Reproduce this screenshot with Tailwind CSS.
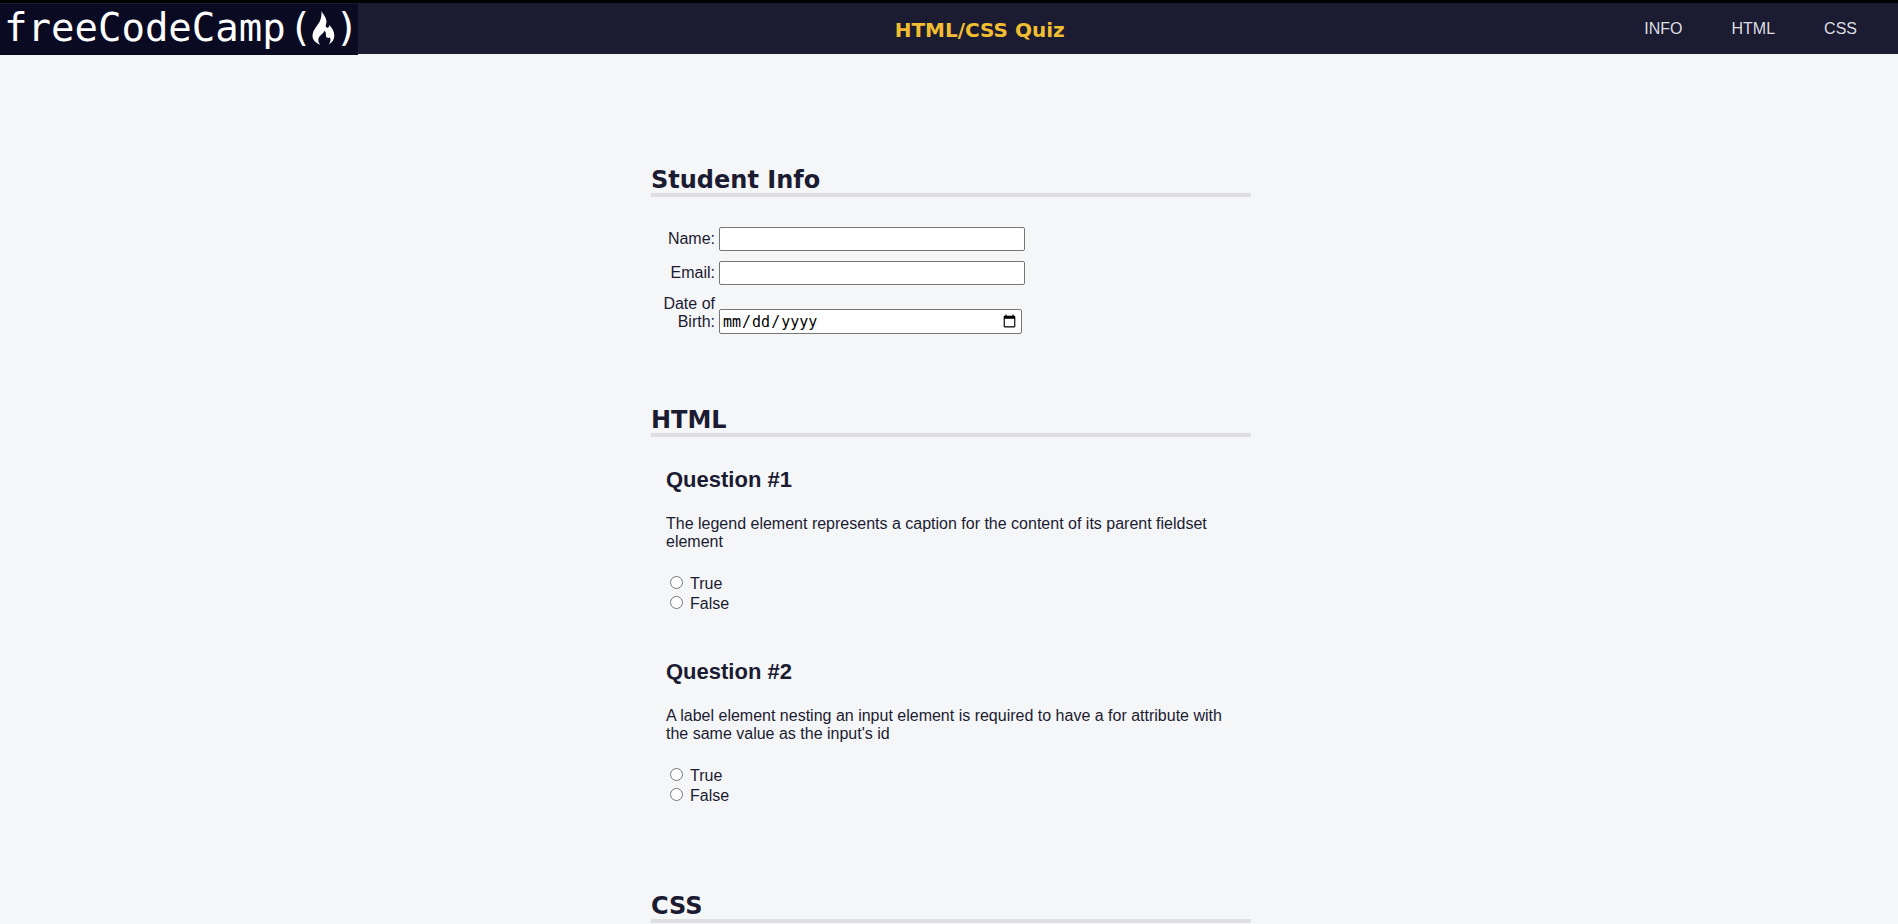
<!DOCTYPE html>
<html lang="en">
<head>
<meta charset="UTF-8">
<meta name="viewport" content="width=device-width, initial-scale=1.0">
<title>HTML/CSS Quiz</title>
<script src="https://cdn.jsdelivr.net/npm/@tailwindcss/browser@4"></script>
</head>
<body class="bg-[#f5f6f7] font-['Liberation_Sans',Arial,sans-serif] text-base leading-[18px] text-[#1b1b32]">
<header class="flex h-[54px] items-center justify-between border-t-3 border-black bg-[#1b1b32]">
  <a href="#" aria-label="freeCodeCamp" class="mt-px flex h-[51px] w-[358px] shrink-0 items-center self-start bg-[#0a0a23] pb-1 pl-1 font-['DejaVu_Sans_Mono',monospace] text-[39px] leading-[46px] text-white">
    <span class="mr-[3px]">freeCodeCamp</span>
    <span>(</span>
    <svg class="h-[34px] w-[23px] shrink-0" viewBox="0 0 23 34" fill="#fff" aria-hidden="true">
      <path d="M9.500 0C10.500 2.500 14.500 6.500 14.500 10.500C14.500 12.500 13.200 14.500 14 16C15 17.200 17.500 17 17.300 14C20.500 17.500 22.300 20.500 22.300 24.500C22.300 28.500 20.500 31.500 16.500 33.500C18.500 31 19 29 18 26.500C16.500 27.500 14.200 27 14 25C13.800 23.200 14.500 22 12.500 19.500C12 22.500 7.500 24 6.500 27.500C5.800 30 6.800 32 8 33.700C3.500 32 .3 28.500 .5 24.500C.8 18 6.500 14.500 8.500 8.500C9.500 5.500 9.500 3 9.500 0Z"/>
    </svg>
    <span>)</span>
  </a>
  <h1 class="pt-0.5 font-['Verdana','DejaVu_Sans',sans-serif] text-xl leading-6 font-bold text-[#f1be32]">HTML/CSS Quiz</h1>
  <nav class="pr-[41px] pl-[43px]">
    <ul class="flex gap-[49px] text-[#dfdfe2]">
      <li><a href="#student-info">INFO</a></li>
      <li><a href="#html-questions">HTML</a></li>
      <li><a href="#css-questions">CSS</a></li>
    </ul>
  </nav>
</header>
<main class="pt-[113px] pl-1">
  <form class="mx-auto max-w-[600px]">
    <section id="student-info" aria-labelledby="info-title" class="pb-[73px]">
      <h2 id="info-title" class="mb-[30px] border-b-4 border-[#dfdfe2] font-['Verdana','DejaVu_Sans',sans-serif] text-2xl leading-[26px] font-bold">Student Info</h2>
      <div class="flex flex-col gap-2.5 pl-2.5">
        <div class="flex items-end gap-1">
          <label for="name" class="w-[54px] pb-[3px] text-right">Name:</label>
          <input id="name" type="text" class="h-6 w-[306px] rounded-xs border border-[#767676] bg-white px-1">
        </div>
        <div class="flex items-end gap-1">
          <label for="email" class="w-[54px] pb-[3px] text-right">Email:</label>
          <input id="email" type="email" class="h-6 w-[306px] rounded-xs border border-[#767676] bg-white px-1">
        </div>
        <div class="flex items-end gap-1">
          <label for="dob" class="w-[54px] pb-[3px] text-right">Date of Birth:</label>
          <input id="dob" type="date" class="h-[25px] w-[303px] rounded-xs border border-[#767676] bg-white px-0.5 font-['DejaVu_Sans_Mono',monospace] text-[15px] text-black">
        </div>
      </div>
    </section>
    <section id="html-questions" aria-labelledby="html-title" class="pb-[87px]">
      <h2 id="html-title" class="mb-[31px] border-b-4 border-[#dfdfe2] font-['Verdana','DejaVu_Sans',sans-serif] text-2xl leading-[26px] font-bold">HTML</h2>
      <div class="flex flex-col gap-[46px] px-[15px]">
        <article>
          <h3 class="mb-[23px] text-[22px] leading-6 font-bold">Question #1</h3>
          <fieldset>
            <legend class="mb-[23px]">The legend element represents a caption for the content of its parent fieldset element</legend>
            <ul class="pl-1 leading-5">
              <li><label class="flex items-start gap-[7px]"><input type="radio" name="q1" value="true" class="mt-[2px] size-[13px]">True</label></li>
              <li><label class="flex items-start gap-[7px]"><input type="radio" name="q1" value="false" class="mt-[2px] size-[13px]">False</label></li>
            </ul>
          </fieldset>
        </article>
        <article>
          <h3 class="mb-[23px] text-[22px] leading-6 font-bold">Question #2</h3>
          <fieldset>
            <legend class="mb-[23px]">A label element nesting an input element is required to have a for attribute with the same value as the input's id</legend>
            <ul class="pl-1 leading-5">
              <li><label class="flex items-start gap-[7px]"><input type="radio" name="q2" value="true" class="mt-[2px] size-[13px]">True</label></li>
              <li><label class="flex items-start gap-[7px]"><input type="radio" name="q2" value="false" class="mt-[2px] size-[13px]">False</label></li>
            </ul>
          </fieldset>
        </article>
      </div>
    </section>
    <section id="css-questions" aria-labelledby="css-title">
      <h2 id="css-title" class="border-b-4 border-[#dfdfe2] font-['Verdana','DejaVu_Sans',sans-serif] text-2xl leading-[26px] font-bold">CSS</h2>
    </section>
  </form>
</main>
</body>
</html>
